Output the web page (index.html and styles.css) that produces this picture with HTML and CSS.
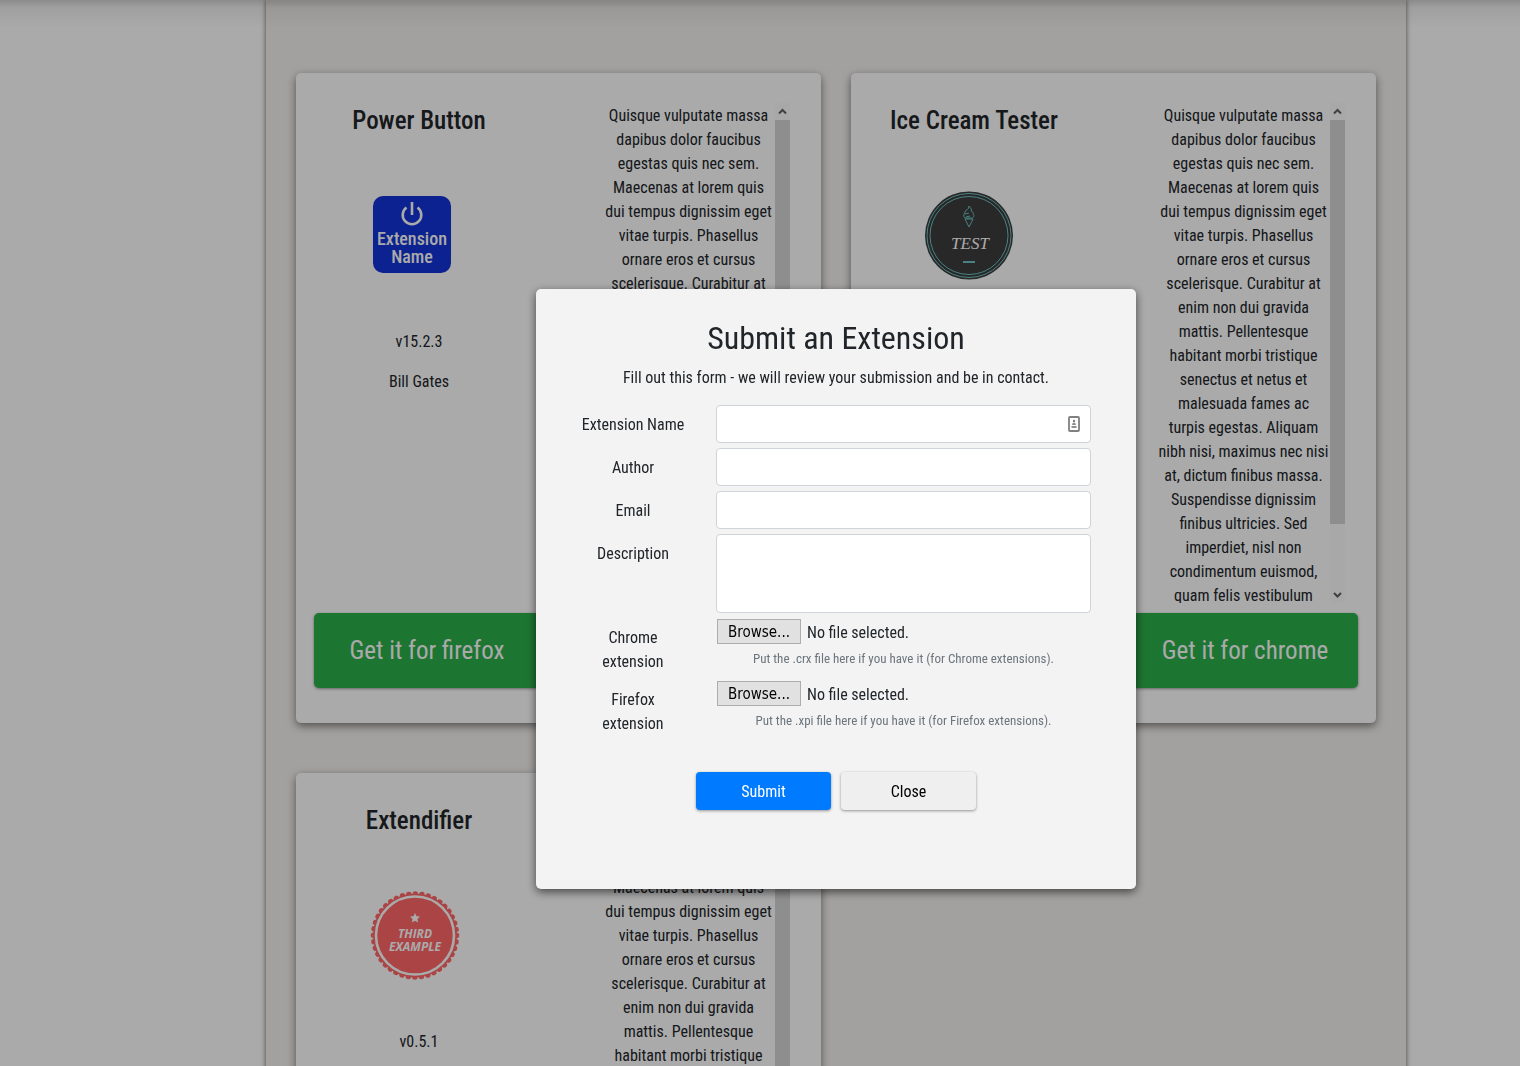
FILE: index.html
```html
<!DOCTYPE html>
<html lang="en">
<head>
<meta charset="utf-8">
<title>Extensions</title>
<meta name="viewport" content="width=device-width, initial-scale=1">
<link rel="stylesheet" href="styles.css">
</head>
<body>
<main class="page">
  <div class="catalog">
    <article class="card">
      <div class="card-body">
        <div class="summary">
          <h2>Power Button</h2>
          <svg class="logo" viewBox="0 0 100 100" aria-hidden="true">
            <rect x="8" y="10" width="78" height="77" rx="10" fill="#1133d8"/>
            <path d="M41.500 21.500A9.300 9.300 0 1 0 52.500 21.500M47 16V29" fill="none" stroke="#fff" stroke-width="2.600"/>
            <text class="logo-name" x="47" y="59">Extension</text>
            <text class="logo-name" x="47" y="77">Name</text>
          </svg>
          <p>v15.2.3</p>
          <p>Bill Gates</p>
        </div>
        <div class="scroller">
          <p class="about">Quisque vulputate massa<br>dapibus dolor faucibus<br>egestas quis nec sem.<br>Maecenas at lorem quis<br>dui tempus dignissim eget<br>vitae turpis. Phasellus<br>ornare eros et cursus<br>scelerisque. Curabitur at</p>
          <div class="bar" aria-hidden="true">
            <svg viewBox="0 0 15 17"><path d="M4 10.500L7.500 7L11 10.500"/></svg>
            <div class="thumb"></div>
            <svg viewBox="0 0 15 17"><path d="M4 7L7.500 10.500L11 7"/></svg>
          </div>
        </div>
      </div>
      <div class="actions"><button type="button" class="get">Get it for firefox</button></div>
    </article>

    <article class="card">
      <div class="card-body">
        <div class="summary">
          <h2>Ice Cream Tester</h2>
          <svg class="logo" viewBox="0 0 100 100" aria-hidden="true">
            <circle cx="49" cy="49.500" r="44" fill="#3c3c3c"/>
            <g fill="none" stroke="#6fc4c6">
              <circle cx="49" cy="49.500" r="42"/>
              <circle cx="49" cy="49.500" r="39"/>
              <path d="M45 33L49 41L53 33ZM44 30C43 28 45 28 45 26C45 24 49 24 49 20C51 22 52 24 51 25C54 26 53 28 53 28C55 30 53 32 52 32H46C44 32 44 31 44 30M45 28L49 27M46 31L50 30"/>
              <path d="M43 76H55" stroke-width="2"/>
            </g>
            <text class="logo-test" x="50" y="63">TEST</text>
          </svg>
        </div>
        <div class="scroller">
          <p class="about">Quisque vulputate massa<br>dapibus dolor faucibus<br>egestas quis nec sem.<br>Maecenas at lorem quis<br>dui tempus dignissim eget<br>vitae turpis. Phasellus<br>ornare eros et cursus<br>scelerisque. Curabitur at<br>enim non dui gravida<br>mattis. Pellentesque<br>habitant morbi tristique<br>senectus et netus et<br>malesuada fames ac<br>turpis egestas. Aliquam<br>nibh nisi, maximus nec nisi<br>at, dictum finibus massa.<br>Suspendisse dignissim<br>finibus ultricies. Sed<br>imperdiet, nisl non<br>condimentum euismod,<br>quam felis vestibulum</p>
          <div class="bar" aria-hidden="true">
            <svg viewBox="0 0 15 17"><path d="M4 10.500L7.500 7L11 10.500"/></svg>
            <div class="thumb"></div>
            <svg viewBox="0 0 15 17"><path d="M4 7L7.500 10.500L11 7"/></svg>
          </div>
        </div>
      </div>
      <div class="actions actions-end"><button type="button" class="get">Get it for chrome</button></div>
    </article>

    <article class="card">
      <div class="card-body">
        <div class="summary">
          <h2>Extendifier</h2>
          <svg class="logo" viewBox="0 0 100 100" aria-hidden="true">
            <circle cx="50" cy="49.500" r="42" fill="#ff6668"/>
            <circle cx="50" cy="49.500" r="41.500" fill="none" stroke="#ff6668" stroke-width="5.500" stroke-linecap="round" stroke-dasharray="0.010 6.510"/>
            <circle cx="50" cy="49.500" r="39" fill="none" stroke="#fff" stroke-width="2.600"/>
            <path d="M50 27L51.500 30.200L55 30.600L52.400 33L53.100 36.500L50 34.800L46.900 36.500L47.600 33L45 30.600L48.500 30.200Z" fill="#fff"/>
            <text class="logo-third" x="50" y="52">THIRD</text>
            <text class="logo-third" x="50" y="65">EXAMPLE</text>
          </svg>
          <p>v0.5.1</p>
        </div>
        <div class="scroller">
          <p class="about">Quisque vulputate massa<br>dapibus dolor faucibus<br>egestas quis nec sem.<br>Maecenas at lorem quis<br>dui tempus dignissim eget<br>vitae turpis. Phasellus<br>ornare eros et cursus<br>scelerisque. Curabitur at<br>enim non dui gravida<br>mattis. Pellentesque<br>habitant morbi tristique</p>
          <div class="bar" aria-hidden="true">
            <svg viewBox="0 0 15 17"><path d="M4 10.500L7.500 7L11 10.500"/></svg>
            <div class="thumb"></div>
            <svg viewBox="0 0 15 17"><path d="M4 7L7.500 10.500L11 7"/></svg>
          </div>
        </div>
      </div>
    </article>
  </div>
</main>

<div class="overlay">
  <section class="modal" role="dialog" aria-labelledby="modal-title">
    <h1 id="modal-title">Submit an Extension</h1>
    <p class="lead">Fill out this form - we will review your submission and be in contact.</p>
    <form>
      <div class="row">
        <label for="name">Extension Name</label>
        <div class="field">
          <input class="control" type="text" id="name">
          <svg class="autofill" viewBox="0 0 12 16" aria-hidden="true">
            <rect x="1" y="1" width="10" height="14" rx="1" fill="#fff" stroke="#808080" stroke-width="1.800"/>
            <circle cx="6" cy="5" r="1.200" fill="#808080"/>
            <path d="M4 9Q4 6.500 6 6.500T8 9ZM3.500 10H8.500V12H3.500Z" fill="#909090"/>
          </svg>
        </div>
      </div>
      <div class="row">
        <label for="author">Author</label>
        <input class="control" type="text" id="author">
      </div>
      <div class="row">
        <label for="email">Email</label>
        <input class="control" type="email" id="email">
      </div>
      <div class="row">
        <label for="description">Description</label>
        <textarea class="control area" id="description"></textarea>
      </div>
      <div class="row">
        <label for="chrome">Chrome extension</label>
        <div class="upload">
          <div class="picker">
            <span class="browse">Browse...</span><span class="chosen">No file selected.</span>
            <input type="file" id="chrome">
          </div>
          <small>Put the .crx file here if you have it (for Chrome extensions).</small>
        </div>
      </div>
      <div class="row">
        <label for="firefox">Firefox extension</label>
        <div class="upload">
          <div class="picker">
            <span class="browse">Browse...</span><span class="chosen">No file selected.</span>
            <input type="file" id="firefox">
          </div>
          <small>Put the .xpi file here if you have it (for Firefox extensions).</small>
        </div>
      </div>
      <div class="buttons">
        <button type="submit" class="btn primary">Submit</button>
        <button type="button" class="btn">Close</button>
      </div>
    </form>
  </section>
</div>
</body>
</html>
```
FILE: styles.css
```css
* { box-sizing: border-box; }

body {
  margin: 0;
  height: 100vh;
  overflow: hidden;
  background: #fff;
  color: #212529;
  font: 16px/24px "Roboto Condensed", "Liberation Sans Narrow", "Liberation Sans", sans-serif;
  text-align: center;
}

h1, h2, p { margin: 0; font-weight: 400; }
button, input, textarea { font: inherit; }

.page { padding: 0 114px 0 266px; }

.catalog {
  display: grid;
  grid-template-columns: 1fr 1fr;
  gap: 50px 30px;
  padding: 73px 30px 50px;
  background: #f5f2ef;
  box-shadow: 0 0 5px rgba(0, 0, 0, .6);
}

.card {
  min-height: 650px;
  padding: 30px 18px;
  border-radius: 5px;
  background: #fff;
  box-shadow: 0 3px 8px rgba(0, 0, 0, .5);
}

.card-body { display: flex; justify-content: space-between; }

.summary {
  width: 210px;
  padding-top: 1px;
  display: flex;
  flex-direction: column;
  align-items: center;
}

.summary h2 {
  font-size: 25px;
  font-weight: 500;
  line-height: 34px;
  white-space: nowrap;
}

.summary p { margin-bottom: 16px; }

.logo { width: 100px; height: 100px; margin: 48px 8px 44px 0; }
.logo text { fill: #fff; text-anchor: middle; }
.logo-name { font-size: 18px; font-weight: 500; line-height: 18px; }
.logo-test { font: italic 17px "Liberation Serif", serif; }
.logo-third { font: italic bold 12px "Open Sans", sans-serif; }

.scroller { display: flex; height: 500px; margin-right: 13px; }
.about { width: 171px; padding-top: 1px; overflow: hidden; white-space: nowrap; }

.bar {
  width: 16px;
  display: flex;
  flex-direction: column;
  border-left: 1px solid #fff;
  background: #fcfcfc;
}
.bar svg { width: 15px; height: 17px; fill: none; stroke: #606060; stroke-width: 2; }
.thumb { height: 404px; margin-bottom: auto; background: #d6d6d6; }

.actions { display: flex; margin-top: 10px; }
.actions-end { justify-content: flex-end; }

.get {
  width: 226px;
  height: 75px;
  border: 0;
  border-radius: 5px;
  background: #2cb04b;
  color: #fff;
  font-size: 25px;
  box-shadow: 0 1px 3px rgba(0, 0, 0, .4);
}

.overlay {
  position: fixed;
  inset: 0;
  display: flex;
  justify-content: center;
  align-items: flex-start;
  padding: 289px 114px 0 266px;
  background:
    linear-gradient(rgba(0, 0, 0, .18), rgba(0, 0, 0, .06) 8px, transparent 28px),
    rgba(0, 0, 0, .333);
}

.modal {
  width: 600px;
  min-height: 600px;
  padding: 30px 45px;
  border-radius: 5px;
  background: #f3f3f3;
  box-shadow: 0 3px 10px rgba(0, 0, 0, .6);
}

.modal h1 { font-size: 32px; line-height: 38px; margin-bottom: 9px; }
.lead { margin-bottom: 15px; }

.row {
  display: grid;
  grid-template-columns: 104px 375px;
  column-gap: 31px;
  align-items: start;
  margin-bottom: 5px;
}
.row label { padding-top: 8px; }

.field { position: relative; display: flex; }

.control {
  width: 100%;
  height: 38px;
  padding: 6px 12px;
  border: 1px solid #ced4da;
  border-radius: 4px;
  background: #fff;
}
.area { display: block; height: 79px; resize: none; }

.autofill { position: absolute; right: 11px; top: 11px; width: 12px; height: 16px; }

.upload { padding: 1px 0 6px; }
.picker {
  position: relative;
  display: flex;
  gap: 6px;
  padding-left: 1px;
}
.picker input { position: absolute; inset: 0; width: 100%; opacity: 0; }
.chosen { padding-top: 2px; }

.browse {
  width: 84px;
  height: 25px;
  border: 1px solid #adadad;
  background: #e1e1e1;
  color: #000;
  font-family: "DejaVu Sans Condensed", "Noto Sans", sans-serif;
  font-size: 15px;
  line-height: 25px;
}

small {
  display: block;
  margin-top: 4px;
  color: #6c757d;
  font-size: 13px;
  line-height: 20px;
}

.buttons { display: flex; justify-content: center; gap: 10px; margin-top: 35px; }

.btn {
  width: 135px;
  height: 38px;
  padding: 2px 0 0;
  border: 0;
  border-radius: 4px;
  background: #efefef;
  color: #000;
  box-shadow: 0 1px 3px rgba(0, 0, 0, .4);
}
.primary { background: #007bff; color: #fff; }
```
